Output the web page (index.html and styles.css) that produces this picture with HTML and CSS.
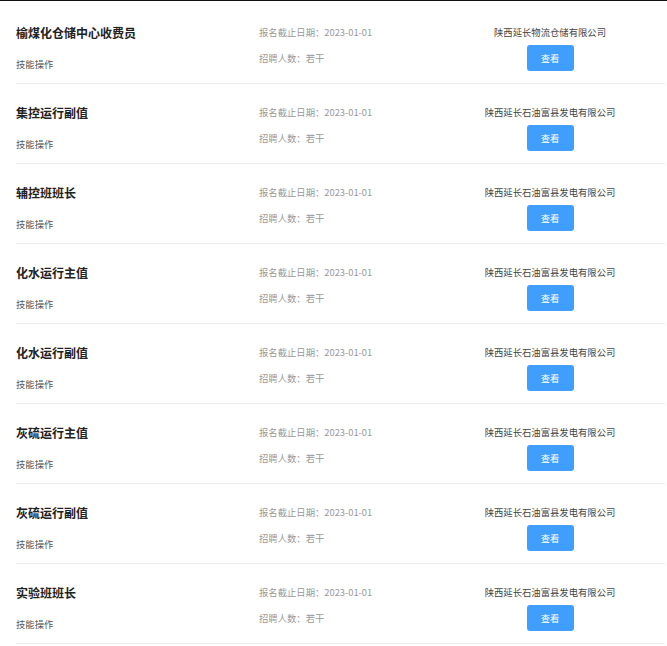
FILE: index.html
```html
<!DOCTYPE html>
<html lang="zh-CN">
<head>
  <meta charset="UTF-8">
  <meta name="viewport" content="width=device-width, initial-scale=1.0">
  <title>招聘岗位</title>
  <link rel="stylesheet" href="styles.css">
</head>
<body>
  <div class="topline"></div>
  <ul class="job-list">
    <li class="job">
      <div class="job-main">
        <div class="job-title">榆煤化仓储中心收费员</div>
        <div class="job-type">技能操作</div>
      </div>
      <div class="job-info">
        <div>报名截止日期：2023-01-01</div>
        <div class="job-count">招聘人数：若干</div>
      </div>
      <div class="job-company">
        <div class="company-name">陕西延长物流仓储有限公司</div>
        <button class="view-btn">查看</button>
      </div>
    </li>
    <li class="job">
      <div class="job-main">
        <div class="job-title">集控运行副值</div>
        <div class="job-type">技能操作</div>
      </div>
      <div class="job-info">
        <div>报名截止日期：2023-01-01</div>
        <div class="job-count">招聘人数：若干</div>
      </div>
      <div class="job-company">
        <div class="company-name">陕西延长石油富县发电有限公司</div>
        <button class="view-btn">查看</button>
      </div>
    </li>
    <li class="job">
      <div class="job-main">
        <div class="job-title">辅控班班长</div>
        <div class="job-type">技能操作</div>
      </div>
      <div class="job-info">
        <div>报名截止日期：2023-01-01</div>
        <div class="job-count">招聘人数：若干</div>
      </div>
      <div class="job-company">
        <div class="company-name">陕西延长石油富县发电有限公司</div>
        <button class="view-btn">查看</button>
      </div>
    </li>
    <li class="job">
      <div class="job-main">
        <div class="job-title">化水运行主值</div>
        <div class="job-type">技能操作</div>
      </div>
      <div class="job-info">
        <div>报名截止日期：2023-01-01</div>
        <div class="job-count">招聘人数：若干</div>
      </div>
      <div class="job-company">
        <div class="company-name">陕西延长石油富县发电有限公司</div>
        <button class="view-btn">查看</button>
      </div>
    </li>
    <li class="job">
      <div class="job-main">
        <div class="job-title">化水运行副值</div>
        <div class="job-type">技能操作</div>
      </div>
      <div class="job-info">
        <div>报名截止日期：2023-01-01</div>
        <div class="job-count">招聘人数：若干</div>
      </div>
      <div class="job-company">
        <div class="company-name">陕西延长石油富县发电有限公司</div>
        <button class="view-btn">查看</button>
      </div>
    </li>
    <li class="job">
      <div class="job-main">
        <div class="job-title">灰硫运行主值</div>
        <div class="job-type">技能操作</div>
      </div>
      <div class="job-info">
        <div>报名截止日期：2023-01-01</div>
        <div class="job-count">招聘人数：若干</div>
      </div>
      <div class="job-company">
        <div class="company-name">陕西延长石油富县发电有限公司</div>
        <button class="view-btn">查看</button>
      </div>
    </li>
    <li class="job">
      <div class="job-main">
        <div class="job-title">灰硫运行副值</div>
        <div class="job-type">技能操作</div>
      </div>
      <div class="job-info">
        <div>报名截止日期：2023-01-01</div>
        <div class="job-count">招聘人数：若干</div>
      </div>
      <div class="job-company">
        <div class="company-name">陕西延长石油富县发电有限公司</div>
        <button class="view-btn">查看</button>
      </div>
    </li>
    <li class="job">
      <div class="job-main">
        <div class="job-title">实验班班长</div>
        <div class="job-type">技能操作</div>
      </div>
      <div class="job-info">
        <div>报名截止日期：2023-01-01</div>
        <div class="job-count">招聘人数：若干</div>
      </div>
      <div class="job-company">
        <div class="company-name">陕西延长石油富县发电有限公司</div>
        <button class="view-btn">查看</button>
      </div>
    </li>
  </ul>
</body>
</html>
```

FILE: styles.css
```css
body {
  margin: 0;
  background: #fff;
  color: #333;
  font-family: "Noto Sans CJK SC", "Noto Sans", sans-serif;
}
.topline {
  height: 1px;
  background: #111;
}
.job-list {
  list-style: none;
  margin: 0 0 0 16px;
  padding: 3px 0 0;
  width: 649px;
}
.job {
  box-sizing: border-box;
  height: 80px;
  padding-top: 21px;
  border-bottom: 1px solid #ececec;
  display: grid;
  grid-template-columns: 243px 1fr 230px;
}
.job-title {
  font-size: 12px;
  line-height: 16px;
  font-weight: bold;
  color: #222;
  margin-bottom: 16px;
}
.job-type {
  font-size: 9.33px;
  line-height: 14px;
  color: #555;
}
.job-info {
  font-size: 9.33px;
  line-height: 14px;
  color: #999;
}
.job-count {
  margin-top: 12px;
}
.job-company {
  display: flex;
  flex-direction: column;
  align-items: center;
}
.company-name {
  font-size: 9.33px;
  line-height: 14px;
  color: #444;
  margin-bottom: 6px;
}
.view-btn {
  width: 47px;
  height: 26px;
  padding: 0;
  border: none;
  border-radius: 3px;
  background: #409eff;
  color: #fff;
  font-family: inherit;
  font-size: 9.33px;
  cursor: pointer;
}
```
